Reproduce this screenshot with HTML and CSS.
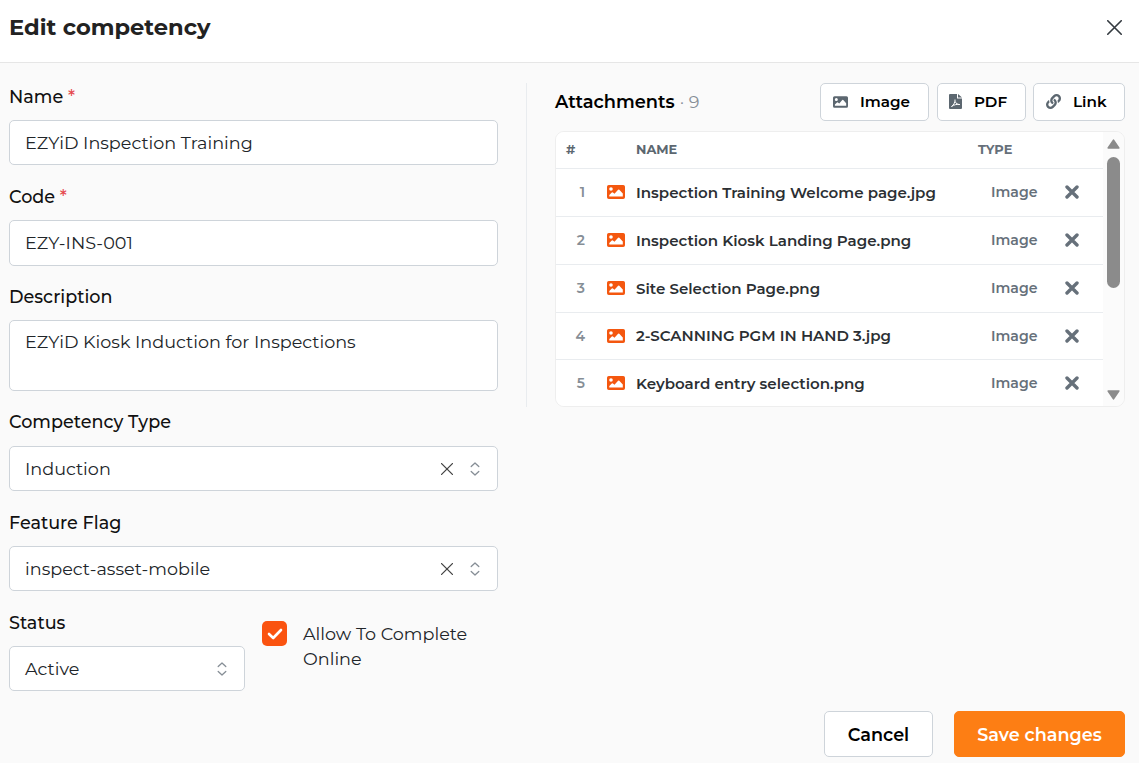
FILE: index.html
```
<!DOCTYPE html>
<html lang="en">
<head>
  <meta charset="UTF-8" />
  <meta name="viewport" content="width=device-width, initial-scale=1.0" />
  <title>Edit competency</title>
  <link rel="stylesheet" href="styles.css">
</head>
<body>
  <!-- icon shapes used more than once -->
  <svg class="sprite">
    <symbol id="icon-image" viewBox="0 0 18 14">
      <path fill-rule="evenodd" d="M1.8 0h14.4A1.8 1.8 0 0 1 18 1.8v10.4a1.8 1.8 0 0 1-1.8 1.8H1.8A1.8 1.8 0 0 1 0 12.2V1.8A1.8 1.8 0 0 1 1.8 0zM4 2.2a1.8 1.8 0 1 0 0 3.6a1.8 1.8 0 0 0 0-3.6zM2.3 11.6h13.5V8.6L12.3 4.7q-.6-.6-1.2 0L7.5 8.8L5.9 7.5q-.6-.4-1.1 0L2.3 10z"/>
    </symbol>
    <symbol id="icon-remove" viewBox="0 0 14 14">
      <path d="M2 2l10 10M12 2L2 12" fill="none" stroke="currentColor" stroke-width="3.4" stroke-linecap="round"/>
    </symbol>
    <symbol id="icon-clear" viewBox="0 0 12 12">
      <path d="M.6.6l10.8 10.8M11.4.6L.6 11.4" fill="none" stroke="currentColor" stroke-width="1.3" stroke-linecap="round"/>
    </symbol>
    <symbol id="icon-updown" viewBox="0 0 10 14">
      <path d="M1.2 4.5L5 1l3.8 3.5M1.2 9.5L5 13l3.8-3.5" fill="none" stroke="currentColor" stroke-width="1.3" stroke-linecap="round" stroke-linejoin="round"/>
    </symbol>
  </svg>

  <header class="modal-header">
    <h1>Edit competency</h1>
    <button class="close-button" aria-label="Close"><svg width="15" height="15"><use href="#icon-clear"/></svg></button>
  </header>

  <main class="modal-body">
    <form class="details">
      <div class="field">
        <label>Name <span class="required">*</span></label>
        <div class="input">EZYiD Inspection Training</div>
      </div>
      <div class="field">
        <label>Code <span class="required">*</span></label>
        <div class="input input-code">EZY-INS-001</div>
      </div>
      <div class="field">
        <label>Description</label>
        <div class="input textarea">EZYiD Kiosk Induction for Inspections</div>
      </div>
      <div class="field">
        <label class="label-type">Competency Type</label>
        <div class="input select">
          <span>Induction</span>
          <svg class="clear" width="12" height="12"><use href="#icon-clear"/></svg>
          <svg class="updown" width="10" height="14"><use href="#icon-updown"/></svg>
        </div>
      </div>
      <div class="field">
        <label>Feature Flag</label>
        <div class="input select">
          <span>inspect-asset-mobile</span>
          <svg class="clear" width="12" height="12"><use href="#icon-clear"/></svg>
          <svg class="updown" width="10" height="14"><use href="#icon-updown"/></svg>
        </div>
      </div>
      <div class="field-row">
        <div class="field">
          <label>Status</label>
          <div class="input select">
            <span>Active</span>
            <svg class="updown" width="10" height="14"><use href="#icon-updown"/></svg>
          </div>
        </div>
        <div class="check">
          <span class="checkbox">
            <svg width="16" height="12" viewBox="0 0 16 12"><path d="M2 6l4.2 4L14 2" fill="none" stroke="#fff" stroke-width="2.6" stroke-linecap="round" stroke-linejoin="round"/></svg>
          </span>
          <span class="check-label">Allow To Complete<br>Online</span>
        </div>
      </div>
    </form>

    <section class="attachments">
      <div class="attachments-header">
        <h2>Attachments</h2>
        <span class="count">· 9</span>
        <div class="add-buttons">
          <button class="add add-image"><svg width="15" height="12"><use href="#icon-image"/></svg><span>Image</span></button>
          <button class="add add-pdf">
            <svg width="13" height="15" viewBox="0 0 13 15">
              <path d="M1 0h7v4.4h5V14a1 1 0 0 1-1 1H1a1 1 0 0 1-1-1V1a1 1 0 0 1 1-1zM9 0l4 3.6H9z"/>
              <path d="M2.5 12.5C4.5 11.5 6.6 7.5 6 5.5M6.1 7.5C7 9.5 8.5 10.7 10.8 10.5C8 10 5 10.7 2.5 12.5" fill="none" stroke="#fff" stroke-width="1"/>
            </svg>
            <span>PDF</span>
          </button>
          <button class="add add-link">
            <svg width="15" height="15" viewBox="0 0 512 512"><path d="M326.612 185.391c59.747 59.809 58.927 155.698.36 214.59-.11.12-.24.25-.36.37l-67.2 67.2c-59.27 59.27-155.699 59.262-214.96 0-59.27-59.26-59.27-155.7 0-214.96l37.106-37.106c9.84-9.84 26.786-3.3 27.294 10.606.648 17.722 3.826 35.527 9.69 52.721 1.986 5.822.567 12.262-3.783 16.612l-13.087 13.087c-28.026 28.026-28.905 73.66-1.155 101.96 28.024 28.579 74.086 28.749 102.325.51l67.2-67.19c28.191-28.191 28.073-73.757 0-101.83-3.701-3.694-7.429-6.564-10.341-8.569a16.037 16.037 0 0 1-6.947-12.606c-.396-10.567 3.348-21.456 11.698-29.806l21.054-21.055c5.521-5.521 14.182-6.199 20.584-1.731a152.482 152.482 0 0 1 20.522 17.197zM467.547 44.449c-59.261-59.262-155.69-59.27-214.96 0l-67.2 67.2c-.12.12-.25.25-.36.37-58.566 58.892-59.387 154.781.36 214.59a152.454 152.454 0 0 0 20.521 17.196c6.402 4.468 15.064 3.789 20.584-1.731l21.054-21.055c8.35-8.35 12.094-19.239 11.698-29.806a16.037 16.037 0 0 0-6.947-12.606c-2.912-2.005-6.64-4.875-10.341-8.569-28.073-28.073-28.191-73.639 0-101.83l67.2-67.19c28.239-28.239 74.3-28.069 102.325.51 27.75 28.3 26.872 73.934-1.155 101.96l-13.087 13.087c-4.35 4.35-5.769 10.79-3.783 16.612 5.864 17.194 9.042 34.999 9.69 52.721.509 13.906 17.454 20.446 27.294 10.606l37.106-37.106c59.271-59.259 59.271-155.699.001-214.959z"/></svg>
            <span>Link</span>
          </button>
        </div>
      </div>

      <div class="table-wrap">
        <div class="table">
          <div class="row head"><span>#</span><span></span><span>NAME</span><span class="type">TYPE</span><span></span></div>
          <div class="row">
            <span class="num">1</span><svg class="file" width="18" height="14"><use href="#icon-image"/></svg>
            <span class="name">Inspection Training Welcome page.jpg</span><span class="type">Image</span>
            <svg class="remove" width="14" height="14"><use href="#icon-remove"/></svg>
          </div>
          <div class="row">
            <span class="num">2</span><svg class="file" width="18" height="14"><use href="#icon-image"/></svg>
            <span class="name">Inspection Kiosk Landing Page.png</span><span class="type">Image</span>
            <svg class="remove" width="14" height="14"><use href="#icon-remove"/></svg>
          </div>
          <div class="row">
            <span class="num">3</span><svg class="file" width="18" height="14"><use href="#icon-image"/></svg>
            <span class="name">Site Selection Page.png</span><span class="type">Image</span>
            <svg class="remove" width="14" height="14"><use href="#icon-remove"/></svg>
          </div>
          <div class="row row-short">
            <span class="num">4</span><svg class="file" width="18" height="14"><use href="#icon-image"/></svg>
            <span class="name">2-SCANNING PGM IN HAND 3.jpg</span><span class="type">Image</span>
            <svg class="remove" width="14" height="14"><use href="#icon-remove"/></svg>
          </div>
          <div class="row">
            <span class="num">5</span><svg class="file" width="18" height="14"><use href="#icon-image"/></svg>
            <span class="name">Keyboard entry selection.png</span><span class="type">Image</span>
            <svg class="remove" width="14" height="14"><use href="#icon-remove"/></svg>
          </div>
        </div>
        <div class="scrollbar">
          <svg width="13" height="10" viewBox="0 0 13 10"><path d="M1.2 9L6.5 1.2L11.8 9z" stroke="#8b8b8b" stroke-width="1.6" stroke-linejoin="round"/></svg>
          <div class="thumb"></div>
          <svg class="down" width="13" height="10" viewBox="0 0 13 10"><path d="M1.2 1L6.5 8.8L11.8 1z" stroke="#8b8b8b" stroke-width="1.6" stroke-linejoin="round"/></svg>
        </div>
      </div>
    </section>
  </main>

  <footer class="modal-footer">
    <button class="cancel">Cancel</button>
    <button class="save">Save changes</button>
  </footer>
</body>
</html>
```

FILE: styles.css
```
* {
  box-sizing: border-box;
}

body {
  margin: 0;
  height: 763px;
  overflow: hidden;
  background-color: #fafafa;
  color: #212529;
  font-family: Montserrat, Inter, sans-serif;
  font-size: 17.6px;
}

h1, h2 {
  margin: 0;
}

button {
  font-family: inherit;
  background-color: #fff;
  border: 1px solid #ced4da;
  border-radius: 5px;
  color: #000;
  padding: 0;
}

svg {
  display: block;
  fill: currentColor;
  flex-shrink: 0;
}

.sprite {
  display: none;
}

.modal-header {
  height: 63px;
  padding: 0 17px 8px 9px;
  display: flex;
  justify-content: space-between;
  align-items: center;
  background-color: #fff;
  border-bottom: 1px solid #e6e6e6;
}

.modal-header h1 {
  font-size: 22.6px;
  font-weight: 700;
  line-height: 30px;
  color: #222;
}

.close-button {
  border: none;
  color: #343a40;
}

.modal-body {
  display: flex;
  align-items: flex-start;
  padding: 20px 14px 0 9px;
}

.details {
  width: 489px;
  padding-top: 2px;
  display: flex;
  flex-direction: column;
  gap: 20px;
}

.field label {
  display: block;
  height: 25px;
  line-height: 23px;
  margin-bottom: 10px;
  font-weight: 500;
  color: #111;
}

.field .label-type {
  line-height: 22px;
}

.required {
  color: #e5484d;
}

.input {
  height: 45px;
  padding: 0 15px;
  line-height: 43px;
  background-color: #fff;
  border: 1px solid #ced4da;
  border-radius: 5px;
  font-size: 17.6px;
  font-weight: 400;
  white-space: nowrap;
}

.input-code {
  height: 46px;
  margin-bottom: -1px;
}

.textarea {
  height: 71px;
  line-height: 41px;
}

.select {
  display: flex;
  align-items: center;
  padding-right: 17px;
}

.select span {
  flex: 1;
}

.clear {
  color: #444;
  margin-right: 17px;
}

.updown {
  color: #868e96;
}

.field-row {
  display: flex;
}

.field-row .field {
  width: 236px;
}

.check {
  display: flex;
  margin: 10px 0 0 17px;
}

.checkbox {
  width: 25px;
  height: 25px;
  display: flex;
  align-items: center;
  justify-content: center;
  background-color: #fa5310;
  border-radius: 5px;
}

.check-label {
  margin-left: 16px;
  line-height: 25px;
}

/* attachments */
.attachments {
  flex: 1;
  height: 324px;
  margin-left: 28px;
  padding-left: 28px;
  border-left: 1px solid #e9ecef;
}

.attachments-header {
  display: flex;
  align-items: center;
  height: 38px;
  margin-bottom: 10px;
}

.attachments-header h2 {
  padding-bottom: 2px;
  font-size: 17.8px;
  font-weight: 600;
  color: #000;
}

.count {
  margin-left: 5px;
  padding-bottom: 2px;
  color: #868e96;
}

.add-buttons {
  display: flex;
  margin-left: auto;
}

.add {
  height: 38px;
  display: flex;
  align-items: center;
  font-size: 15.2px;
  font-weight: 600;
  padding: 0 0 1px 12px;
}

.add svg {
  color: #5c6770;
}

.add-image {
  width: 109px;
  margin-right: 8px;
}

.add-pdf {
  width: 89px;
  margin-right: 7px;
  padding-left: 11px;
}

.add-link {
  width: 92px;
}

.add span {
  margin-left: 12px;
}

.table-wrap {
  display: flex;
  height: 276px;
  overflow: hidden;
  border: 1px solid #eee;
  border-radius: 9px;
}

.table {
  flex: 1;
  background-color: #fff;
}

.row {
  display: grid;
  grid-template-columns: 51px 29px 342px 87px 1fr;
  align-items: center;
  height: 48px;
  padding-bottom: 1px;
  border-bottom: 1px solid #e9ecef;
  font-size: 15.2px;
  font-weight: 600;
  white-space: nowrap;
}

.row-short {
  height: 47px;
}

.row.head {
  height: 37px;
  padding-bottom: 2px;
  font-size: 12.9px;
  font-weight: 700;
  color: #5c6770;
}

.row.head span:first-child {
  padding-left: 10px;
}

.num {
  padding-right: 22px;
  text-align: right;
  font-size: 14px;
  color: #868e96;
}

.file {
  color: #f4570f;
}

.name {
  font-size: 15.05px;
  font-weight: 600;
  color: #2b2f33;
}

.type {
  color: #66707a;
}

.row:not(.head) .type {
  padding-left: 13px;
  font-size: 14.1px;
}

.remove {
  color: #66707a;
}

.scrollbar {
  width: 21px;
  display: flex;
  flex-direction: column;
  align-items: center;
  padding: 7px 0 6px;
  background-color: #fbfbfb;
  color: #8b8b8b;
}

.thumb {
  width: 13px;
  height: 131px;
  margin-top: 8px;
  border-radius: 7px;
  background-color: #8b8b8b;
}

.scrollbar .down {
  margin-top: auto;
}

.modal-footer {
  display: flex;
  justify-content: flex-end;
  gap: 21px;
  padding: 20px 14px 0;
}

.modal-footer button {
  height: 46px;
  font-size: 17.6px;
  font-weight: 600;
}

.cancel {
  width: 109px;
}

.modal-footer .save {
  width: 171px;
  background-color: #fd7e14;
  border-color: #fd7e14;
  color: #fff;
}
```
